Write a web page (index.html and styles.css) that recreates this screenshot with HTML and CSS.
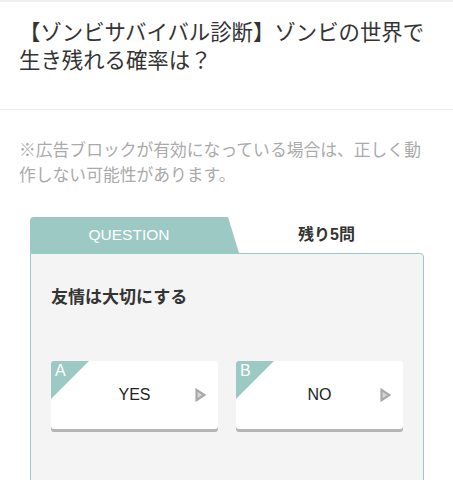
FILE: index.html
```html
<!DOCTYPE html>
<html lang="ja">
<head>
<meta charset="utf-8">
<link rel="stylesheet" href="styles.css">
</head>
<body>
<div class="page">
  <header class="head">
    <h1 class="title">【ゾンビサバイバル診断】ゾンビの世界で生き残れる確率は？</h1>
  </header>
  <p class="notice">※広告ブロックが有効になっている場合は、正しく動作しない可能性があります。</p>
  <section class="quiz">
    <div class="tabs">
      <div class="tab-q">QUESTION</div>
      <div class="tab-rest">残り5問</div>
    </div>
    <div class="panel">
      <p class="question">友情は大切にする</p>
      <div class="answers">
        <button class="answer"><span class="mark">A</span><span class="label">YES</span><svg class="arrow" width="11" height="14" viewBox="0 0 11 14"><path d="M1.5 1.8 L9.3 7 L1.5 12.2 Z" fill="#d6d6d6" stroke="#a9a9a9" stroke-width="2.2" stroke-linejoin="miter"/></svg></button>
        <button class="answer"><span class="mark">B</span><span class="label">NO</span><svg class="arrow" width="11" height="14" viewBox="0 0 11 14"><path d="M1.5 1.8 L9.3 7 L1.5 12.2 Z" fill="#d6d6d6" stroke="#a9a9a9" stroke-width="2.2" stroke-linejoin="miter"/></svg></button>
      </div>
    </div>
  </section>
</div>
</body>
</html>
```
FILE: styles.css
```css
html, body {
  margin: 0;
  padding: 0;
  background: #fff;
}
body {
  font-family: "Liberation Sans", "Noto Sans CJK JP", sans-serif;
  color: #333;
  overflow: hidden;
}
.page {
  border-top: 2px solid #f0f0f0;
}
.head {
  padding: 15px 19px 36px;
  border-bottom: 1px solid #ececec;
}
.title {
  margin: 0;
  font-family: "Noto Sans CJK JP", sans-serif;
  font-weight: 400;
  font-size: 21.4px;
  line-height: 28px;
  color: #333;
}
.notice {
  margin: 27px 19px 0;
  font-family: "Noto Sans CJK JP", sans-serif;
  font-size: 16.8px;
  line-height: 25px;
  color: #aaa;
}
.quiz {
  margin: 30px 29px 0 30px;
}
.tabs {
  display: flex;
  height: 36px;
}
.tab-q {
  position: relative;
  width: 198px;
  background: #9cc9c4;
  border-top-left-radius: 4px;
  color: #fff;
  font-size: 15.5px;
  line-height: 36px;
  text-align: center;
}
.tab-q::after {
  content: "";
  position: absolute;
  top: 0;
  right: -11px;
  width: 11px;
  height: 36px;
  background: #9cc9c4;
  clip-path: polygon(0 0, 0 100%, 100% 100%);
}
.tab-rest {
  flex: 1;
  padding-left: 1px;
  text-align: center;
  font-family: "Liberation Sans", "Noto Sans CJK JP", sans-serif;
  font-weight: 700;
  font-size: 16px;
  line-height: 36px;
  color: #333;
}
.panel {
  background: #f4f4f4;
  border: 1px solid #9cc9c4;
  border-radius: 0 4px 4px 4px;
  padding: 30px 19px 60px 20px;
}
.question {
  margin: 0;
  font-family: "Noto Sans CJK JP", sans-serif;
  font-weight: 700;
  font-size: 17px;
  line-height: 24px;
  color: #333;
}
.answers {
  display: grid;
  grid-template-columns: 167px 167px;
  column-gap: 18px;
  margin-top: 53px;
}
.answer {
  position: relative;
  display: flex;
  align-items: center;
  justify-content: center;
  height: 68px;
  padding: 0;
  border: none;
  border-radius: 3px;
  background: #fff;
  box-shadow: 0 3px 0 #b5b5b5;
  font-family: "Liberation Sans", "Noto Sans CJK JP", sans-serif;
  font-size: 16px;
  color: #222;
  cursor: pointer;
}
.mark {
  position: absolute;
  top: 0;
  left: 0;
  width: 38px;
  height: 38px;
  background: #9cc9c4;
  clip-path: polygon(0 0, 100% 0, 0 100%);
  border-top-left-radius: 3px;
  color: #fff;
  font-size: 16px;
  line-height: 20px;
  text-align: left;
  padding-left: 4px;
  box-sizing: border-box;
}
.label {
  line-height: 20px;
}
.arrow {
  position: absolute;
  right: 12px;
  top: 27px;
}
```
